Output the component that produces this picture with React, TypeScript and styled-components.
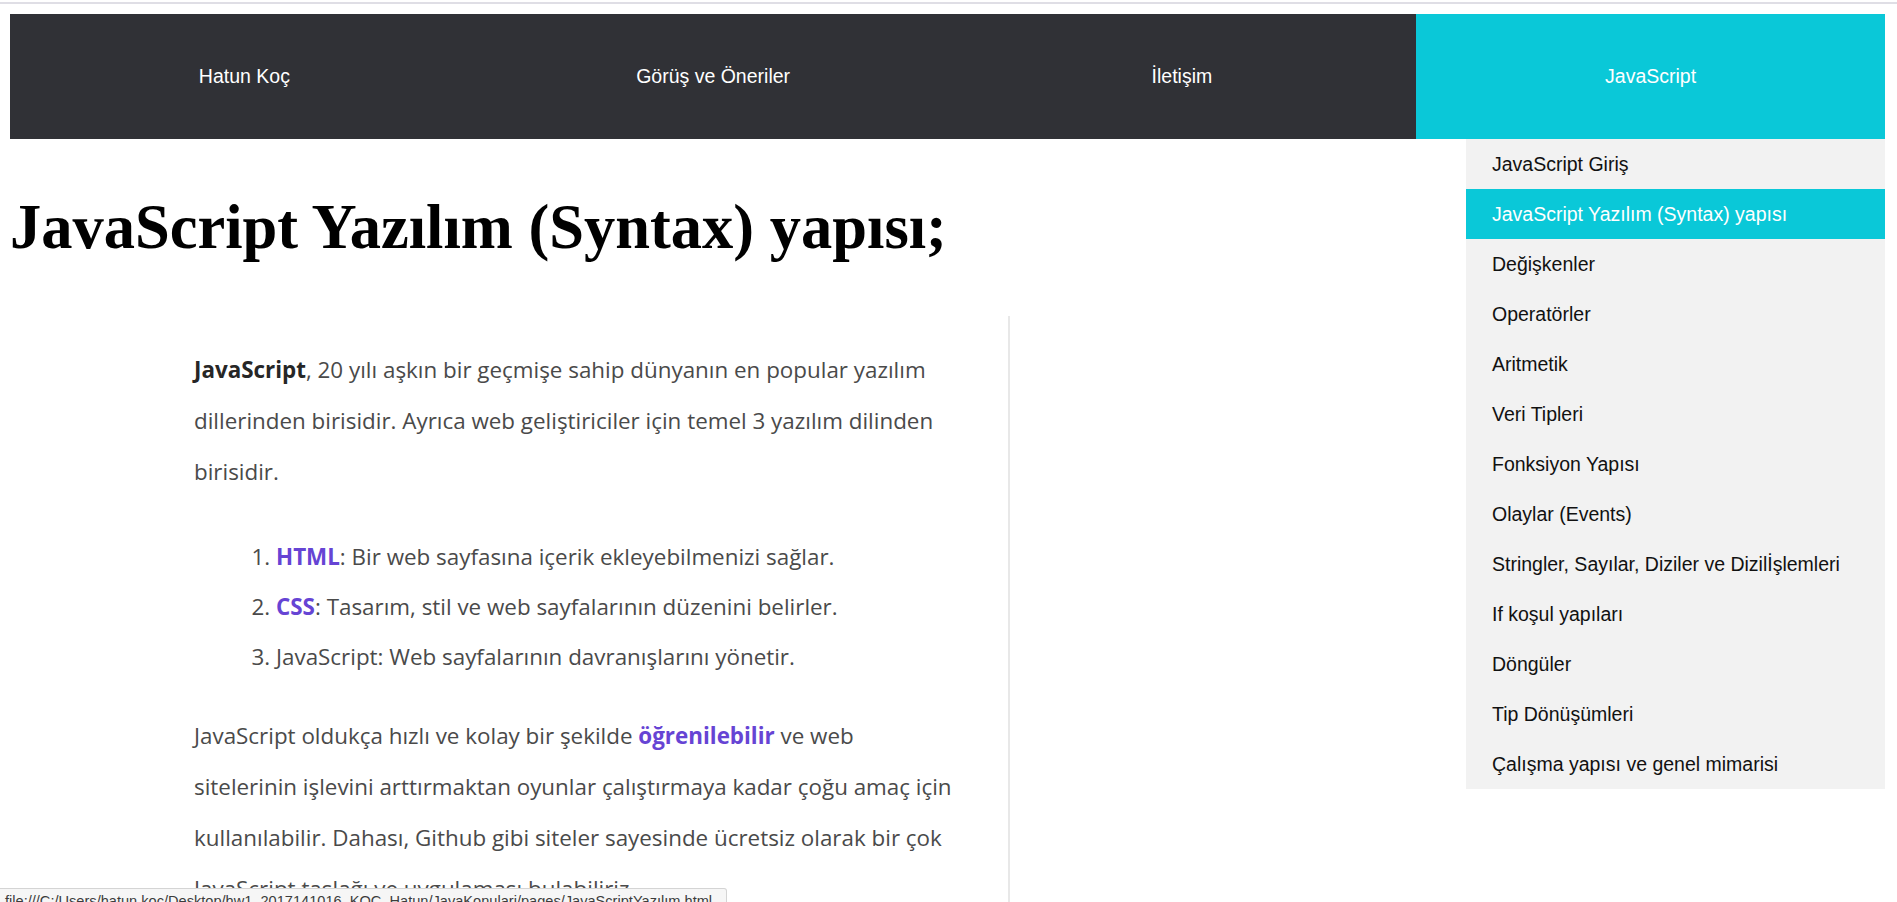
import React from "react";
import styled, { createGlobalStyle } from "styled-components";

const GlobalStyle = createGlobalStyle`
  html, body { margin: 0; padding: 0; background: #ffffff; }
  body { font-family: "Liberation Sans", Arial, sans-serif; }
  * { box-sizing: border-box; }
`;

const Page = styled.div`
  position: relative;
  height: 100vh;
  overflow: hidden;
  background: #ffffff;
`;

const TopRule = styled.div`
  height: 2px;
  margin-top: 2px;
  background: #dfdee5;
`;

const Content = styled.div`
  padding: 10px 12px 0 10px;
`;

const NavBar = styled.nav`
  display: grid;
  grid-template-columns: repeat(4, 1fr);
  height: 125px;
  background: #303136;
`;

const NavItem = styled.div<{ $active?: boolean }>`
  position: relative;
  display: flex;
  align-items: center;
  justify-content: center;
  background: ${(p) => (p.$active ? "#0ac8d8" : "transparent")};
  color: #ffffff;
  font-family: "Liberation Sans", Arial, sans-serif;
  font-size: 19.5px;
`;

const Dropdown = styled.ul`
  position: absolute;
  top: 100%;
  right: 0;
  width: 419px;
  margin: 0;
  padding: 0;
  list-style: none;
  background: #f2f2f2;
  z-index: 5;
`;

const DropItem = styled.li<{ $active?: boolean }>`
  display: flex;
  align-items: center;
  height: 50px;
  padding-left: 26px;
  background: ${(p) => (p.$active ? "#0ac8d8" : "transparent")};
  color: ${(p) => (p.$active ? "#ffffff" : "#111111")};
  font-family: "Liberation Sans", Arial, sans-serif;
  font-size: 19.5px;
  white-space: nowrap;
`;

const Heading = styled.h1`
  margin: 52px 0 0 0;
  font-family: "Liberation Serif", "Times New Roman", serif;
  font-weight: bold;
  font-size: 62.5px;
  line-height: 72px;
  color: #000000;
`;

const Figure = styled.div`
  margin: 53px 0 0 150px;
  width: 850px;
  padding: 28px 0 0 34px;
  border-right: 2px solid #e8e8e8;
  min-height: 700px;
  font-family: "Open Sans", Lato, sans-serif;
  font-size: 22.4px;
  color: #4a4a4a;
`;

const Para = styled.p<{ $gap: number }>`
  margin: ${(p) => p.$gap}px 0 0 0;
  line-height: 51px;
  white-space: nowrap;
`;

const Strong = styled.b`
  color: #262626;
  font-weight: 700;
`;

const Link = styled.b`
  color: #6644d4;
  font-weight: 700;
`;

const List = styled.ol`
  margin: 35px 0 0 0;
  padding-left: 82px;
  line-height: 50px;
  white-space: nowrap;
`;

const StatusBar = styled.div`
  position: absolute;
  left: 0;
  bottom: -12px;
  width: 727px;
  height: 26px;
  padding: 3px 0 0 5px;
  background: #f6f6f6;
  border: 1px solid #d4d4d4;
  border-left: none;
  border-top-right-radius: 3px;
  font-family: "Liberation Sans", Arial, sans-serif;
  font-size: 14.6px;
  line-height: 18px;
  color: #3c3c3c;
  white-space: nowrap;
  overflow: hidden;
`;

const tabs = ["Hatun Koç", "Görüş ve Öneriler", "İletişim", "JavaScript"];

const menu = [
  "JavaScript Giriş",
  "JavaScript Yazılım (Syntax) yapısı",
  "Değişkenler",
  "Operatörler",
  "Aritmetik",
  "Veri Tipleri",
  "Fonksiyon Yapısı",
  "Olaylar (Events)",
  "Stringler, Sayılar, Diziler ve Dizilİşlemleri",
  "If koşul yapıları",
  "Döngüler",
  "Tip Dönüşümleri",
  "Çalışma yapısı ve genel mimarisi",
];

export default function App() {
  return (
    <Page>
      <GlobalStyle />
      <TopRule />
      <Content>
        <NavBar>
          {tabs.map((t, i) => (
            <NavItem key={t} $active={i === 3}>
              {t}
              {i === 3 && (
                <Dropdown>
                  {menu.map((m, j) => (
                    <DropItem key={m} $active={j === 1}>
                      {m}
                    </DropItem>
                  ))}
                </Dropdown>
              )}
            </NavItem>
          ))}
        </NavBar>
        <Heading>JavaScript Yazılım (Syntax) yapısı;</Heading>
        <Figure>
          <Para $gap={0}>
            <Strong>JavaScript</Strong>, 20 yılı aşkın bir geçmişe sahip dünyanın en popular yazılım
            <br />
            dillerinden birisidir. Ayrıca web geliştiriciler için temel 3 yazılım dilinden
            <br />
            birisidir.
          </Para>
          <List>
            <li>
              <Link>HTML</Link>: Bir web sayfasına içerik ekleyebilmenizi sağlar.
            </li>
            <li>
              <Link>CSS</Link>: Tasarım, stil ve web sayfalarının düzenini belirler.
            </li>
            <li>JavaScript: Web sayfalarının davranışlarını yönetir.</li>
          </List>
          <Para $gap={28}>
            JavaScript oldukça hızlı ve kolay bir şekilde <Link>öğrenilebilir</Link> ve web
            <br />
            sitelerinin işlevini arttırmaktan oyunlar çalıştırmaya kadar çoğu amaç için
            <br />
            kullanılabilir. Dahası, Github gibi siteler sayesinde ücretsiz olarak bir çok
            <br />
            JavaScript taslağı ve uygulaması bulabiliriz.
          </Para>
        </Figure>
      </Content>
      <StatusBar>
        file:///C:/Users/hatun.koc/Desktop/hw1_2017141016_KOÇ_Hatun/JavaKonulari/pages/JavaScriptYazılım.html
      </StatusBar>
    </Page>
  );
}
